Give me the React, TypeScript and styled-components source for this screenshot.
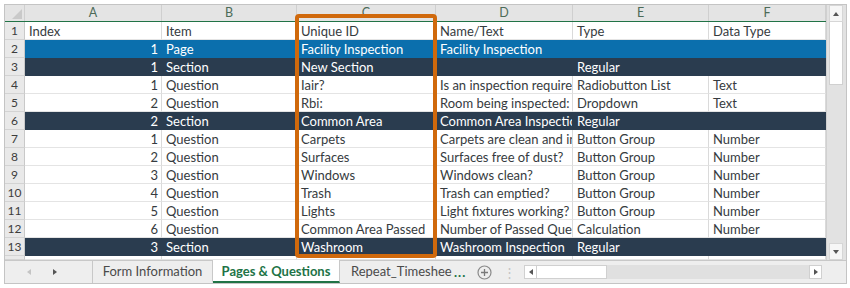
import React from 'react';
import styled, { createGlobalStyle } from 'styled-components';

type Variant = 'plain' | 'blue' | 'dark';

interface SheetRow {
  variant: Variant;
  cells: string[];
}

const COLS = '20px 137px 135px 139px 137px 136px 117px';
const LETTERS = ['A', 'B', 'C', 'D', 'E', 'F'];

const rows: SheetRow[] = [
  { variant: 'plain', cells: ['Index', 'Item', 'Unique ID', 'Name/Text', 'Type', 'Data Type'] },
  { variant: 'blue', cells: ['1', 'Page', 'Facility Inspection', 'Facility Inspection', '', ''] },
  { variant: 'dark', cells: ['1', 'Section', 'New Section', '', 'Regular', ''] },
  { variant: 'plain', cells: ['1', 'Question', 'Iair?', 'Is an inspection required?', 'Radiobutton List', 'Text'] },
  { variant: 'plain', cells: ['2', 'Question', 'Rbi:', 'Room being inspected:', 'Dropdown', 'Text'] },
  { variant: 'dark', cells: ['2', 'Section', 'Common Area', 'Common Area Inspection', 'Regular', ''] },
  { variant: 'plain', cells: ['1', 'Question', 'Carpets', 'Carpets are clean and in good condition?', 'Button Group', 'Number'] },
  { variant: 'plain', cells: ['2', 'Question', 'Surfaces', 'Surfaces free of dust?', 'Button Group', 'Number'] },
  { variant: 'plain', cells: ['3', 'Question', 'Windows', 'Windows clean?', 'Button Group', 'Number'] },
  { variant: 'plain', cells: ['4', 'Question', 'Trash', 'Trash can emptied?', 'Button Group', 'Number'] },
  { variant: 'plain', cells: ['5', 'Question', 'Lights', 'Light fixtures working?', 'Button Group', 'Number'] },
  { variant: 'plain', cells: ['6', 'Question', 'Common Area Passed', 'Number of Passed Questions', 'Calculation', 'Number'] },
  { variant: 'dark', cells: ['3', 'Section', 'Washroom', 'Washroom Inspection', 'Regular', ''] },
];

const fills: Record<Variant, string> = {
  plain: '#ffffff',
  blue: '#0b6fad',
  dark: '#2a3c4f',
};

const App: React.FC = () => {
  return (
    <Wrapper>
      <GlobalStyle />
      <Frame>
        <Top>
          <Sheet>
            <HeaderRow>
              <Corner />
              {LETTERS.map((l) => (
                <ColHeader key={l}>{l}</ColHeader>
              ))}
            </HeaderRow>
            {rows.map((row, i) => (
              <Row key={i}>
                <RowHeader>{i + 1}</RowHeader>
                {row.cells.map((c, j) => (
                  // the index column holds numbers from row 2 on, right aligned like Excel
                  <Cell key={j} $variant={row.variant} $right={i > 0 && j === 0}>
                    {c}
                  </Cell>
                ))}
              </Row>
            ))}
            <Row $partial>
              <RowHeader />
              {LETTERS.map((l) => (
                <Cell key={l} $variant="plain" />
              ))}
            </Row>
          </Sheet>
          <VScroll>
            <ScrollButton>
              <Arrow $dir="up" />
            </ScrollButton>
            <VThumb />
            <VTrack />
            <ScrollButton>
              <Arrow $dir="down" />
            </ScrollButton>
          </VScroll>
        </Top>
        <TabBar>
          <NavArrows>
            <Arrow $dir="left" $muted />
            <Arrow $dir="right" />
          </NavArrows>
          <Tab $w={120}>Form Information</Tab>
          <Tab $w={127} $active>
            Pages &amp; Questions
          </Tab>
          <Tab $w={114} $noSep $start>
            Repeat_Timeshee
          </Tab>
          <More>...</More>
          <AddButton>
            <svg width="15" height="15" viewBox="0 0 15 15">
              <circle cx="7.5" cy="7.5" r="6.5" fill="none" stroke="#8a8a8a" strokeWidth="1.2" />
              <path d="M7.5 4v7M4 7.5h7" stroke="#7a7a7a" strokeWidth="1.3" />
            </svg>
          </AddButton>
          <Dots>⋮</Dots>
          <HScroll>
            <HButton>
              <Arrow $dir="left" />
            </HButton>
            <HThumb />
            <HTrack />
            <HButton>
              <Arrow $dir="right" />
            </HButton>
          </HScroll>
        </TabBar>
        <Highlight />
      </Frame>
    </Wrapper>
  );
};

const GlobalStyle = createGlobalStyle`
  body {
    margin: 0;
    background: #ffffff;
    font-family: Lato, "Open Sans", sans-serif;
  }
`;

const Wrapper = styled.div`
  padding: 4px 0 0 4px;
`;

const Frame = styled.div`
  position: relative;
  width: 843px;
  height: 280px;
  box-sizing: border-box;
  border: 1px solid #c4c4c4;
  background: #eeeeee;
  display: flex;
  flex-direction: column;
`;

const Top = styled.div`
  display: flex;
  height: 255px;
`;

const Sheet = styled.div`
  width: 821px;
  overflow: hidden;
  background: #ffffff;
`;

const HeaderRow = styled.div`
  display: grid;
  grid-template-columns: ${COLS};
  height: 17px;
  box-sizing: border-box;
  border-bottom: 1px solid #217346;
  background: #e4e4e4;
`;

const Corner = styled.div`
  position: relative;
  border-right: 1px solid #cfcfcf;
  &::after {
    content: '';
    position: absolute;
    right: 2px;
    bottom: 2px;
    border-style: solid;
    border-width: 0 0 10px 10px;
    border-color: transparent transparent #c9c9c9 transparent;
  }
`;

const ColHeader = styled.div`
  border-right: 1px solid #cfcfcf;
  font-size: 12.5px;
  line-height: 16px;
  text-align: center;
  color: #4c6b58;
`;

const Row = styled.div<{ $partial?: boolean }>`
  display: grid;
  grid-template-columns: ${COLS};
  height: ${(p) => (p.$partial ? 4 : 18)}px;
  overflow: hidden;
`;

const RowHeader = styled.div`
  box-sizing: border-box;
  background: #e9e9e9;
  border-right: 1px solid #c9c9c9;
  border-bottom: 1px solid #d3d3d3;
  font-size: 12px;
  line-height: 17px;
  text-align: center;
  color: #3c3c3c;
`;

const Cell = styled.div<{ $variant: Variant; $right?: boolean }>`
  box-sizing: border-box;
  overflow: hidden;
  white-space: nowrap;
  padding: 0 3px 0 4px;
  font-size: 13px;
  line-height: 18px;
  text-align: ${(p) => (p.$right ? 'right' : 'left')};
  background: ${(p) => fills[p.$variant]};
  color: ${(p) => (p.$variant === 'plain' ? '#363b40' : '#ffffff')};
  border-right: 1px solid ${(p) => (p.$variant === 'plain' ? '#dadada' : fills[p.$variant])};
  border-bottom: 1px solid ${(p) => (p.$variant === 'plain' ? '#e4e4e4' : fills[p.$variant])};
`;

const VScroll = styled.div`
  width: 20px;
  box-sizing: border-box;
  padding: 0 3px 0 2px;
  background: #e2e2e2;
  border-left: 1px solid #d0d0d0;
  display: flex;
  flex-direction: column;
`;

const ScrollButton = styled.div`
  height: 15px;
  display: flex;
  align-items: center;
  justify-content: center;
  background: #f6f6f6;
  border: 1px solid #d6d6d6;
`;

const VThumb = styled.div`
  height: 62px;
  background: #ffffff;
  border: 1px solid #d0d0d0;
  border-top: none;
`;

const VTrack = styled.div`
  flex: 1;
`;

const Arrow = styled.span<{ $dir: 'up' | 'down' | 'left' | 'right'; $muted?: boolean }>`
  width: 0;
  height: 0;
  border-style: solid;
  ${(p) => {
    const c = p.$muted ? '#c4c4c4' : '#555555';
    switch (p.$dir) {
      case 'up':
        return `border-width: 0 3.5px 4px 3.5px; border-color: transparent transparent ${c} transparent;`;
      case 'down':
        return `border-width: 4px 3.5px 0 3.5px; border-color: ${c} transparent transparent transparent;`;
      case 'left':
        return `border-width: 3.5px 4px 3.5px 0; border-color: transparent ${c} transparent transparent;`;
      default:
        return `border-width: 3.5px 0 3.5px 4px; border-color: transparent transparent transparent ${c};`;
    }
  }}
`;

const TabBar = styled.div`
  flex: 1;
  display: flex;
  align-items: stretch;
  border-top: 1px solid #c8c8c8;
  background: #eeeeee;
  font-size: 13px;
  color: #444444;
`;

const NavArrows = styled.div`
  width: 88px;
  display: flex;
  align-items: center;
  padding-left: 22px;
  gap: 22px;
  box-sizing: border-box;
  border-right: 1px solid #c8c8c8;
`;

const Tab = styled.div<{ $w: number; $active?: boolean; $noSep?: boolean; $start?: boolean }>`
  width: ${(p) => p.$w}px;
  box-sizing: border-box;
  display: flex;
  align-items: center;
  justify-content: ${(p) => (p.$start ? 'flex-start' : 'center')};
  padding-left: ${(p) => (p.$start ? 11 : 0)}px;
  white-space: nowrap;
  overflow: hidden;
  margin-top: -1px;
  background: ${(p) => (p.$active ? '#ffffff' : 'transparent')};
  color: ${(p) => (p.$active ? '#217346' : '#4a4a4a')};
  font-weight: ${(p) => (p.$active ? 700 : 400)};
  border-right: 1px solid ${(p) => (p.$noSep ? 'transparent' : '#c8c8c8')};
  border-bottom: 2px solid ${(p) => (p.$active ? '#217346' : 'transparent')};
`;

const More = styled.div`
  width: 20px;
  display: flex;
  align-items: center;
  color: #217346;
  font-weight: 700;
  letter-spacing: 1px;
`;

const AddButton = styled.div`
  width: 20px;
  display: flex;
  align-items: center;
  justify-content: center;
`;

const Dots = styled.div`
  width: 30px;
  display: flex;
  align-items: center;
  justify-content: center;
  color: #c4c4c4;
  font-size: 13px;
`;

const HScroll = styled.div`
  width: 298px;
  display: flex;
  align-items: center;
  padding: 0 2px 0 0;
`;

const HButton = styled.div`
  width: 11px;
  height: 12px;
  display: flex;
  align-items: center;
  justify-content: center;
  background: #ffffff;
  border: 1px solid #d0d0d0;
`;

const HThumb = styled.div`
  width: 69px;
  height: 12px;
  background: #ffffff;
  border: 1px solid #d0d0d0;
  border-left: none;
`;

const HTrack = styled.div`
  flex: 1;
  height: 14px;
  background: #e0e0e0;
`;

const Highlight = styled.div`
  position: absolute;
  left: 290px;
  top: 9px;
  width: 142px;
  height: 244px;
  box-sizing: border-box;
  border: 4.5px solid #d0690c;
  border-radius: 4px;
  pointer-events: none;
`;

export default App;
